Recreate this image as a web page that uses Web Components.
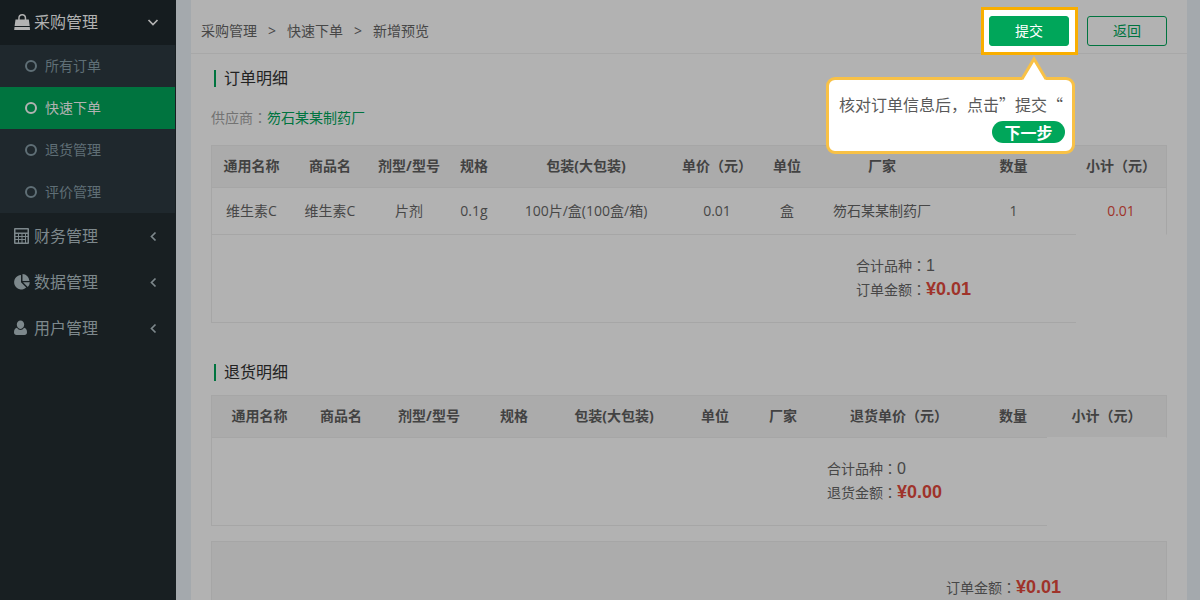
<!DOCTYPE html>
<html lang="zh-CN">
<head>
<meta charset="utf-8">
<meta name="viewport" content="width=device-width, initial-scale=1">
<title>新增预览</title>
<style>
:root{
  --cjk:"Noto Sans CJK SC";
  --green:#00743f;--bright:#00a65a;--paper:#b2b2b2;--head:#ababab;--line:#a6a6a6;
  --text:#474747;--red:#9f332a;
}
body{margin:0;font:14px/20px "Open Sans",var(--cjk),sans-serif;color:var(--text);background:#a4a9ad}
</style>
</head>
<body>
<app-shell>
  <side-nav slot="nav">
    <nav-group label="采购管理" icon="bag" open>
      <nav-link>所有订单</nav-link>
      <nav-link active>快速下单</nav-link>
      <nav-link>退货管理</nav-link>
      <nav-link>评价管理</nav-link>
    </nav-group>
    <nav-group label="财务管理" icon="calc"></nav-group>
    <nav-group label="数据管理" icon="pie"></nav-group>
    <nav-group label="用户管理" icon="user"></nav-group>
  </side-nav>
  <page-bar slot="bar">
    <action-button focus-step>提交<guide-tip slot="tip">核对订单信息后，点击”提交“</guide-tip></action-button>
    <action-button outline>返回</action-button>
  </page-bar>
  <section-title>订单明细</section-title>
  <supplier-line name="笏石某某制药厂"></supplier-line>
  <detail-table kind="order"></detail-table>
  <section-title class="second">退货明细</section-title>
  <detail-table kind="return"></detail-table>
  <total-box><amount-line label="订单金额" value="¥0.01" money></amount-line></total-box>
</app-shell>
<script>
const define = (name, html) => {
  const template = document.createElement('template');
  customElements.define(name, class extends HTMLElement {
    connectedCallback() {
      if (this.shadowRoot) return;
      template.innerHTML = typeof html === 'function' ? html(this) : html;
      this.attachShadow({mode: 'open'}).append(template.content.cloneNode(true));
    }
  });
};

define('app-shell', `<style>
:host{display:grid;grid-template-columns:176px minmax(0,1fr);height:100vh;overflow:hidden}
main{margin:0 13px 0 15px;background:var(--paper);min-width:0}
.content{padding:12px 20px 0;display:flex;flex-direction:column}
::slotted(supplier-line){margin:18px 0 17px}
::slotted(.second){margin:37px 0 11px}
::slotted(total-box){margin-top:15px}
</style><slot name="nav"></slot><main><slot name="bar"></slot><div class="content"><slot></slot></div></main>`);

define('side-nav', `<style>:host{display:block;background:#181f22}nav{display:block}</style><nav><slot></slot></nav>`);

const icons = {
  bag: '<path fill-rule="evenodd" d="M1.500 5.500h2.700V4C4.200 1.500 5.800 0 8.200 0s4 1.500 4 4v1.500h2.600l.9 6.500H.6zM5.700 5.500h5V4c0-1.600-.9-2.600-2.500-2.600S5.700 2.400 5.700 4zM.5 13h15.300l.2 3H.2z"/>',
  calc: '<path fill-rule="evenodd" d="M1 0h13q1 0 1 1v14q0 1-1 1H1q-1 0-1-1V1q0-1 1-1zM1.500 1.500v3h12v-3zM1.500 6v2H4V6zM5 6v2h2.500V6zM8.500 6v2H11V6zM12 6v2h1.500V6zM1.500 9v2H4V9zM5 9v2h2.500V9zM8.500 9v2H11V9zM12 9v5.500h1.500V9zM1.500 12v2.500H4V12zM5 12v2.500h2.500V12zM8.500 12v2.500H11V12z"/>',
  pie: '<path d="M7 1v7.300l5.200 5.200A7.200 7.200 0 1 1 7 1zM8.500 0a7.300 7.300 0 0 1 7 7h-7zM9 8.300h6.800a7 7 0 0 1-2 4.800z"/>',
  user: '<path d="M6.500.5c2.200 0 3.700 1.700 3.700 4S8.700 9 6.500 9 2.800 6.800 2.800 4.500s1.500-4 3.700-4zM3 7.800C4 9.200 5.100 10 6.500 10S9 9.200 10 7.800c2 .2 3 2 3 4.500 0 1.800-1 2.700-2.500 2.700h-8C1 15 0 14.100 0 12.300 0 9.800 1 8 3 7.800z"/>'
};
define('nav-group', el => `<style>
:host{display:block;color:#7d888c;font-size:16px;line-height:24px}
a{display:flex;align-items:center;height:46px;padding:0 14px;color:inherit;text-decoration:none}
:host([open]) a{height:44px;padding-bottom:1px;background:#151c1f;color:#b2b2b2}
.icon{width:16px;height:16px;fill:currentColor;margin-right:4px}
.label{flex:1}
.arrow{width:16px;height:16px;fill:none;stroke:currentColor;stroke-width:1.700}
.sub{margin-right:1px;background:#1f282d}
</style><a href="#"><svg class="icon" viewBox="0 0 16 16">${icons[el.getAttribute('icon')]}</svg><span class="label">${el.getAttribute('label')}</span><svg class="arrow" viewBox="0 0 16 16"><path d="${el.hasAttribute('open') ? 'M2.500 6L7 10.500 11.500 6' : 'M9.500 4.500L5.500 8.500l4 4'}"/></svg></a><div class="sub"><slot></slot></div>`);

define('nav-link', `<style>
:host{display:block;color:#5f6f76;font-size:14px;line-height:20px}
:host([active]){background:var(--green);color:#b2b2b2}
a{display:flex;align-items:center;height:42px;padding-left:25px;gap:8px;color:inherit;text-decoration:none}
i{box-sizing:border-box;width:12px;height:12px;border:2px solid;border-radius:50%}
</style><a href="#"><i></i><span><slot></slot></span></a>`);

define('page-bar', `<style>
:host{display:flex;align-items:center;height:53px;padding:0 20px 0 10px;border-bottom:1px solid #a8a8a8}
nav{flex:1;display:flex;padding-top:8px}
a{color:inherit;text-decoration:none}
.sep{width:30px;text-align:center}
.actions{display:flex;gap:18px;padding-top:9px}
</style><nav aria-label="位置"><a href="#">采购管理</a><span class="sep">&gt;</span><a href="#">快速下单</a><span class="sep">&gt;</span><span>新增预览</span></nav><div class="actions"><slot></slot></div>`);

define('action-button', `<style>
:host{display:block;position:relative}
button{position:relative;display:block;width:80px;height:30px;padding:0;border:1px solid var(--bright);border-radius:3px;background:var(--bright);color:#fff;font:inherit}
:host([outline]) button{background:none;border-color:var(--green);color:var(--green)}
:host([focus-step])::before{content:"";position:absolute;inset:-9px -9px -9px -8px;border:3px solid #f9ae00;background:#fff}
</style><button type="button"><slot></slot></button><slot name="tip"></slot>`);

define('guide-tip', `<style>
:host{position:absolute;z-index:2;top:61px;right:-6px;box-sizing:border-box;width:249px;height:77px;padding:12px 7px 7px 10px;border:3px solid #f8c146;border-radius:9px;background:#fff;color:#595959;font:16px/24px var(--cjk),sans-serif;display:flex;flex-direction:column;align-items:flex-end;gap:5px}
p{margin:0;align-self:flex-start;white-space:nowrap}
button{width:73px;height:22px;padding:0;border:0;border-radius:11px;background:var(--bright);color:#fff;font:bold 16px/22px var(--cjk),sans-serif}
svg{position:absolute;right:23px;top:-24px;width:30px;height:25px}
</style><svg viewBox="0 0 30 25"><path d="M3 24.500L15 3.500l12 21z" fill="#fff"/><path d="M3 23L15 3l12 20" fill="none" stroke="#f8c146" stroke-width="3"/></svg><p><slot></slot></p><button type="button">下一步</button>`);

define('section-title', `<style>
:host{display:block}
h2{display:flex;align-items:center;gap:8px;margin:0 0 0 3px;font-size:16px;line-height:24px;font-weight:normal;color:#222}
h2::before{content:"";width:2px;height:17px;background:var(--green)}
</style><h2><slot></slot></h2>`);

define('supplier-line', el => `<style>
:host{display:block;color:#737373}
a{color:var(--green);text-decoration:none}
</style>供应商<span lang="zh-TW">：</span><a href="#">${el.getAttribute('name')}</a>`);

define('amount-line', el => `<style>
:host{display:flex;line-height:24px}
b{font:16px/24px "Liberation Sans",sans-serif}
:host([money]) b{font-size:18px;line-height:22px;font-weight:bold;color:var(--red)}
</style><span>${el.getAttribute('label')}<span lang="zh-TW">：</span></span><b>${el.getAttribute('value')}</b>`);

const tables = {
  order: {
    widths: [80,78,80,50,174,88,52,138,125,91],
    heads: ['通用名称','商品名','剂型/型号','规格','包装(大包装)','单价（元）','单位','厂家','数量','小计（元）'],
    rows: [['维生素C','维生素C','片剂','0.1g','100片/盒(100盒/箱)','0.01','盒','笏石某某制药厂','1','0.01']],
    count: '1', label: '订单金额', amount: '¥0.01'
  },
  return: {
    widths: [96,68,108,62,138,64,72,160,68,120],
    heads: ['通用名称','商品名','剂型/型号','规格','包装(大包装)','单位','厂家','退货单价（元）','数量','小计（元）'],
    rows: [], count: '0', label: '退货金额', amount: '¥0.00'
  }
};
define('detail-table', el => {
  const t = tables[el.getAttribute('kind')];
  return `<style>
:host{display:block}
table{width:100%;table-layout:fixed;border-collapse:separate;border-spacing:0;color:inherit;font:inherit}
th,td{box-sizing:border-box;padding:0;text-align:center;white-space:nowrap;border:0 solid var(--line);border-bottom-width:1px}
th{height:43px;padding-bottom:2px;border-top-width:1px;background:var(--head) padding-box;color:#424242}
td{height:47px}
tfoot td{height:88px;padding-bottom:2px}
tr>:first-child{border-left-width:1px}
th:last-child,tbody td:last-child{border-right-width:1px}
tbody td:last-child{color:var(--red);border-bottom-color:transparent}
:host([kind=return]) th:last-child{border-bottom-color:transparent}
.sum{width:220px;margin-left:auto}
</style><table><colgroup>${t.widths.map(w => `<col style="width:${w}px">`).join('')}</colgroup>
<thead><tr>${t.heads.map(h => `<th scope="col">${h}</th>`).join('')}</tr></thead>
<tbody>${t.rows.map(r => `<tr>${r.map(c => `<td>${c}</td>`).join('')}</tr>`).join('')}</tbody>
<tfoot><tr><td colspan="9"><div class="sum"><amount-line label="合计品种" value="${t.count}"></amount-line><amount-line label="${t.label}" value="${t.amount}" money></amount-line></div></td></tr></tfoot></table>`;
});

define('total-box', `<style>
:host{display:block;border:1px solid var(--line);background:#acacac;padding:34px 0}
div{width:220px;margin-left:auto}
</style><div><slot></slot></div>`);
</script>
</body>
</html>
